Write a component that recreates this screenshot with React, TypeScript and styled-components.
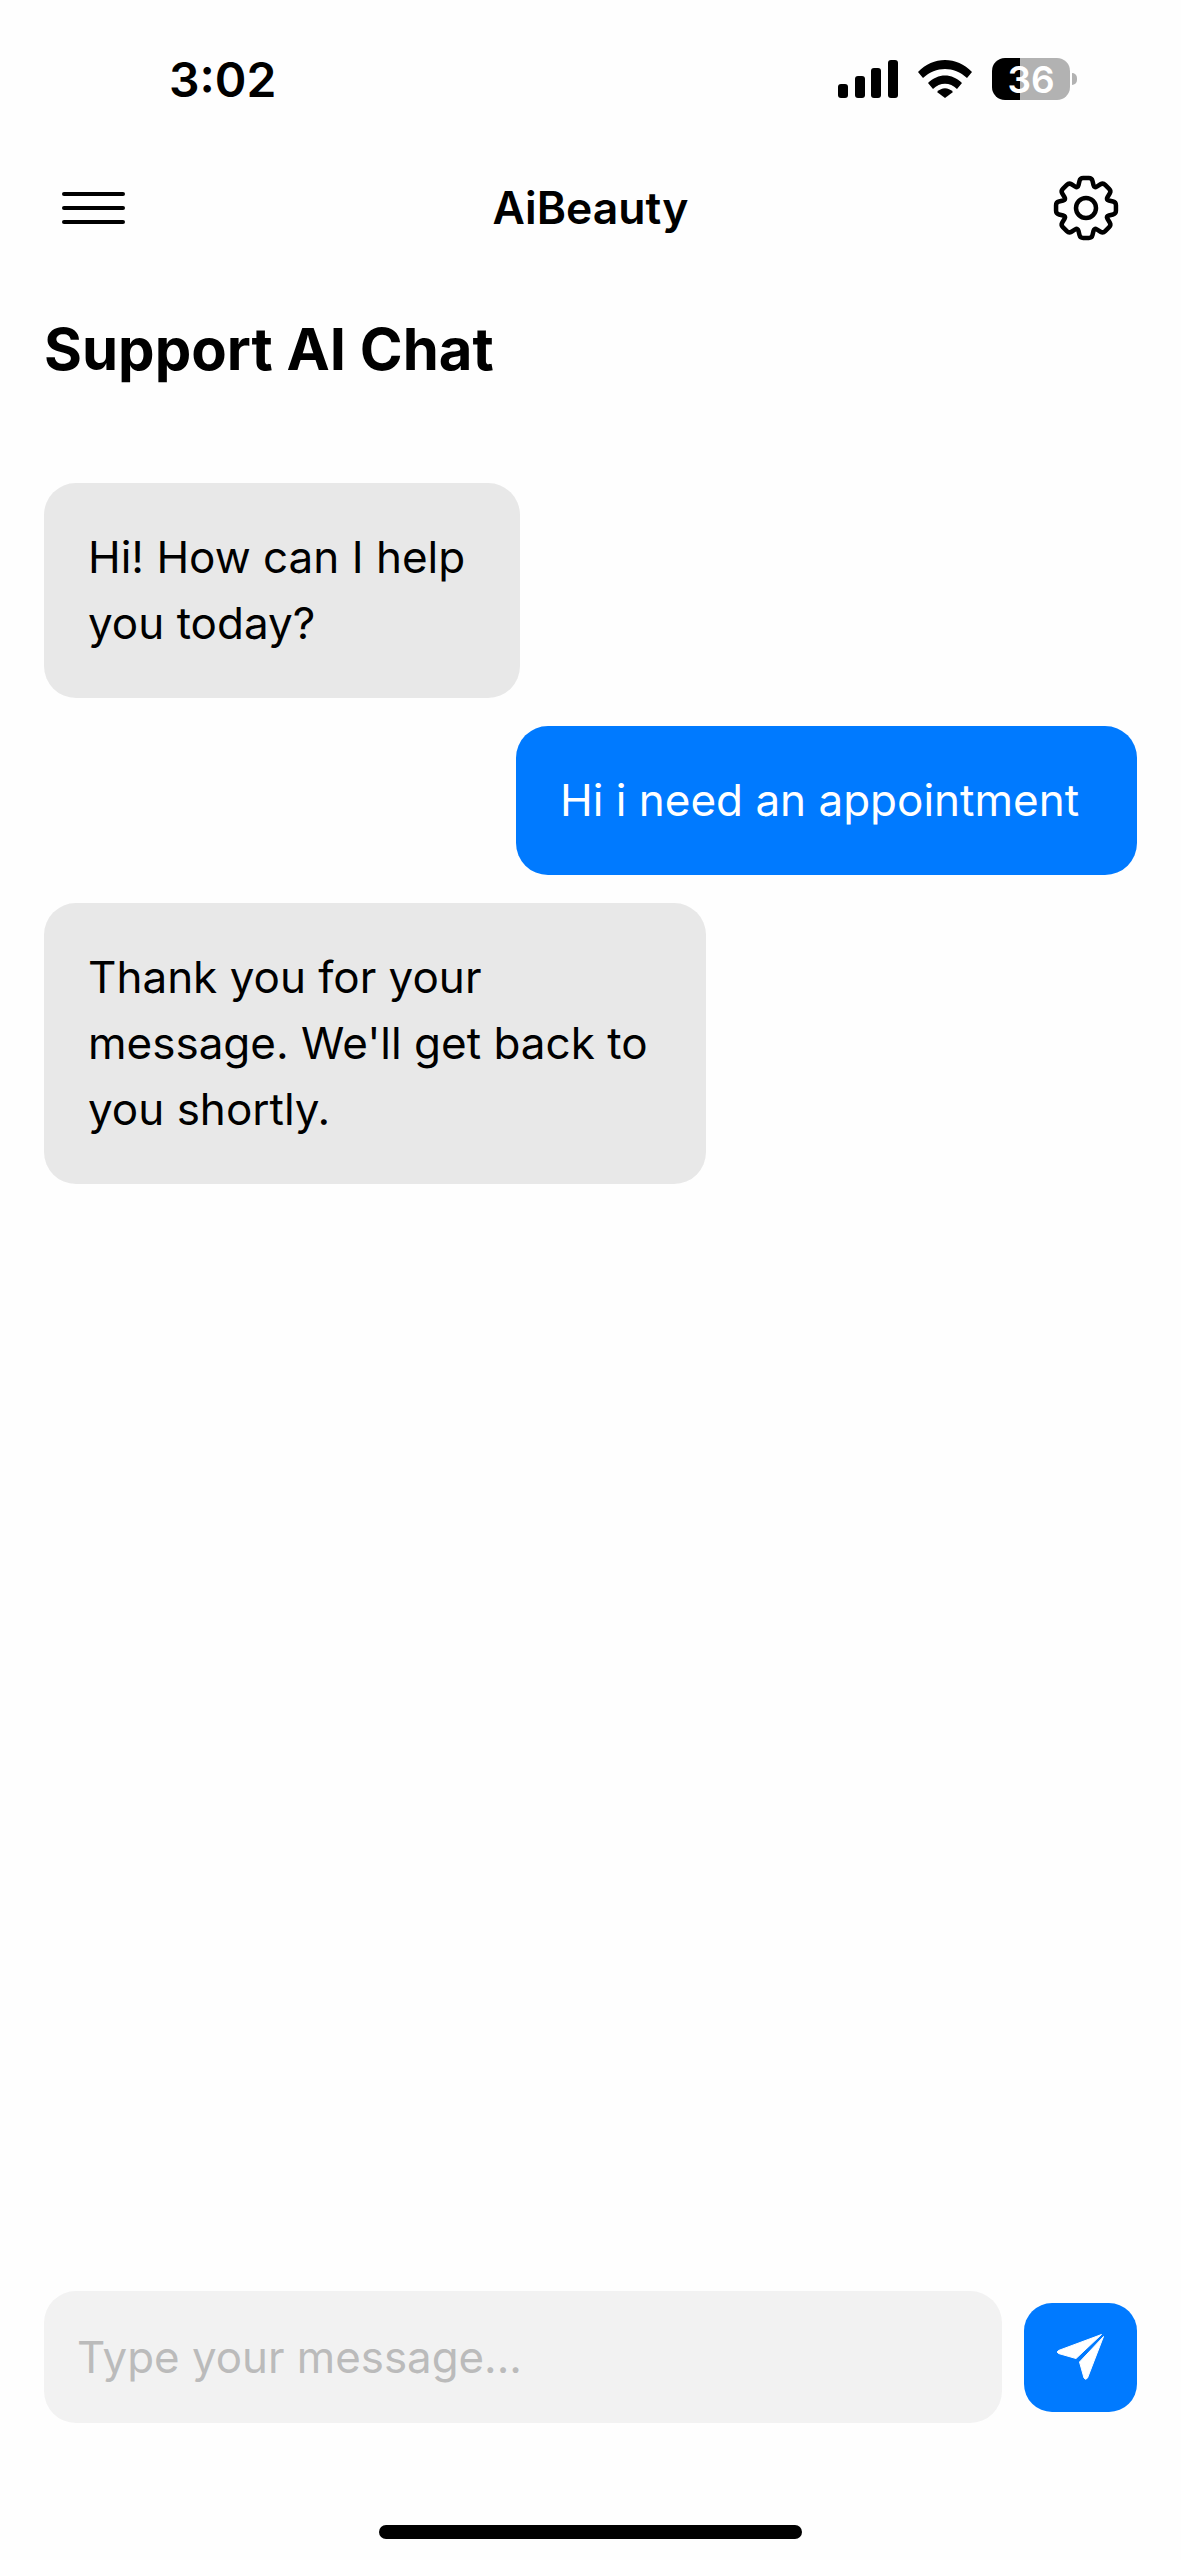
import React from 'react'
import styled, { createGlobalStyle } from 'styled-components'

const GlobalStyle = createGlobalStyle`
  html, body {
    margin: 0;
    padding: 0;
    background: #fefefe;
  }

  * {
    box-sizing: border-box;
  }
`

const Screen = styled.div`
  width: 1181px;
  height: 2560px;
  display: flex;
  flex-direction: column;
  background: #fefefe;
  color: #000;
  font-family: Inter, 'Liberation Sans', sans-serif;
  overflow: hidden;
`

const StatusBar = styled.div`
  height: 158px;
  flex: none;
  display: flex;
  align-items: center;
  justify-content: space-between;
  padding: 0 111px 0 169px;
`

const Clock = styled.div`
  font-size: 48px;
  font-weight: 600;
  letter-spacing: 0;
`

const StatusIcons = styled.div`
  display: flex;
  align-items: center;
  gap: 20px;
`

const Battery = styled.div`
  position: relative;
  width: 78px;
  height: 42px;
  border-radius: 13px;
  background: linear-gradient(to right, #000 0, #000 36.5%, #b2b2b2 36.5%, #b2b2b2 100%);
  display: flex;
  align-items: center;
  justify-content: center;
  color: #fff;
  font-size: 37px;
  font-weight: 600;
  &::after {
    content: '';
    position: absolute;
    right: -7px;
    top: 15px;
    width: 5px;
    height: 12px;
    border-radius: 0 5px 5px 0;
    background: #b2b2b2;
  }
`

const Header = styled.div`
  height: 84px;
  flex: none;
  display: grid;
  grid-template-columns: 1fr auto 1fr;
  align-items: center;
  padding: 0 61px;
  margin-top: 8px;
`

const HeaderSide = styled.div<{ $end?: boolean }>`
  display: flex;
  justify-content: ${p => (p.$end ? 'flex-end' : 'flex-start')};
`

const AppName = styled.div`
  font-size: 44.5px;
  font-weight: 600;
`

const PageTitle = styled.h1`
  margin: 0;
  padding: 64px 44px 0;
  font-size: 58px;
  font-weight: 700;
  line-height: 70px;
`

const Messages = styled.div`
  flex: 1;
  display: flex;
  flex-direction: column;
  gap: 28px;
  padding: 99px 44px 0;
`

const Bubble = styled.div<{ $mine?: boolean; $width: number }>`
  width: ${p => p.$width}px;
  align-self: ${p => (p.$mine ? 'flex-end' : 'flex-start')};
  padding: 40.5px 44px 42.5px;
  border-radius: 32px;
  background: ${p => (p.$mine ? '#007aff' : '#e8e8e8')};
  color: ${p => (p.$mine ? '#fff' : '#000')};
  font-size: 44px;
  line-height: 66px;
`

const Composer = styled.div`
  flex: none;
  display: flex;
  align-items: center;
  gap: 22px;
  padding: 0 44px;
`

const MessageInput = styled.div`
  flex: 1;
  height: 132px;
  display: flex;
  align-items: center;
  padding: 0 33px;
  border-radius: 32px;
  background: #f2f2f2;
  color: #bbbbbb;
  font-size: 43.85px;
`

const SendButton = styled.div`
  width: 113px;
  height: 109px;
  display: flex;
  align-items: center;
  justify-content: center;
  border-radius: 28px;
  background: #007aff;
`

const HomeBar = styled.div`
  flex: none;
  height: 137px;
  display: flex;
  align-items: flex-end;
  justify-content: center;
  padding-bottom: 21px;
  &::before {
    content: '';
    width: 423px;
    height: 14px;
    border-radius: 7px;
    background: #000;
  }
`

function SignalIcon() {
  return (
    <svg width="60" height="38" viewBox="0 0 60 38" fill="#000">
      <rect x="0" y="24" width="10" height="14" rx="3" />
      <rect x="17" y="16" width="10" height="22" rx="3" />
      <rect x="33" y="8" width="10" height="30" rx="3" />
      <rect x="50" y="0" width="10" height="38" rx="3" />
    </svg>
  )
}

function WifiIcon() {
  return (
    <svg width="54" height="38" viewBox="0 0 54 38" fill="#000">
      <path d="M0 12C15-4 39-4 54 12l-5 6C36 6 18 6 5 18z" />
      <path d="M10 23c10-10 24-10 34 0l-5 6c-7-7-17-7-24 0z" />
      <path d="M19 32c5-5 11-5 16 0l-8 6z" />
    </svg>
  )
}

function HamburgerIcon() {
  return (
    <svg width="64" height="34" viewBox="0 0 64 34" stroke="#000" strokeWidth="4" strokeLinecap="round">
      <line x1="3" y1="3" x2="62" y2="3" />
      <line x1="3" y1="17" x2="62" y2="17" />
      <line x1="3" y1="31" x2="62" y2="31" />
    </svg>
  )
}

// 8 tooth outline, every corner rounded with a quadratic curve
function gearPath() {
  const points: [number, number][] = []
  const at = (r: number, deg: number): [number, number] => [
    r * Math.cos((deg * Math.PI) / 180),
    r * Math.sin((deg * Math.PI) / 180),
  ]
  for (let i = 0; i < 8; i++) {
    const a = i * 45 - 90
    points.push(at(30.5, a - 11), at(30.5, a + 11), at(21.5, a + 22.5))
  }
  const toward = (from: [number, number], to: [number, number], d: number) => {
    const len = Math.hypot(to[0] - from[0], to[1] - from[1])
    return [from[0] + ((to[0] - from[0]) * d) / len, from[1] + ((to[1] - from[1]) * d) / len].map(n => n.toFixed(2)).join(' ')
  }
  const segments = points.map((p, i) => {
    const prev = points[(i + points.length - 1) % points.length]
    const next = points[(i + 1) % points.length]
    return `${i === 0 ? 'M' : 'L'}${toward(p, prev, 3)} Q${p[0].toFixed(2)} ${p[1].toFixed(2)} ${toward(p, next, 3)}`
  })
  return `${segments.join(' ')} Z`
}

function GearIcon() {
  return (
    <svg width="68" height="68" viewBox="-34 -34 68 68" fill="none" stroke="#000" strokeWidth="4.5">
      <path d={gearPath()} />
      <circle r="10" />
    </svg>
  )
}

function SendIcon() {
  return (
    <svg width="50" height="50" viewBox="0 0 50 50" fill="#fff" stroke="#fff" strokeWidth="1" strokeLinejoin="round">
      <path d="M45.5 2.5 2.5 18.5Q0 20 2.5 21.5L20 26.5Z" />
      <path d="M47.5 4.5 31.5 46Q29.5 48.5 28 46L23.5 30Z" />
    </svg>
  )
}

export default function App() {
  return (
    <Screen>
      <GlobalStyle />
      <StatusBar>
        <Clock>3:02</Clock>
        <StatusIcons>
          <SignalIcon />
          <WifiIcon />
          <Battery>36</Battery>
        </StatusIcons>
      </StatusBar>
      <Header>
        <HeaderSide>
          <HamburgerIcon />
        </HeaderSide>
        <AppName>AiBeauty</AppName>
        <HeaderSide $end>
          <GearIcon />
        </HeaderSide>
      </Header>
      <PageTitle>Support AI Chat</PageTitle>
      <Messages>
        <Bubble $width={476}>Hi! How can I help you today?</Bubble>
        <Bubble $mine $width={621}>Hi i need an appointment</Bubble>
        <Bubble $width={662}>Thank you for your message. We'll get back to you shortly.</Bubble>
      </Messages>
      <Composer>
        <MessageInput>Type your message...</MessageInput>
        <SendButton>
          <SendIcon />
        </SendButton>
      </Composer>
      <HomeBar />
    </Screen>
  )
}
